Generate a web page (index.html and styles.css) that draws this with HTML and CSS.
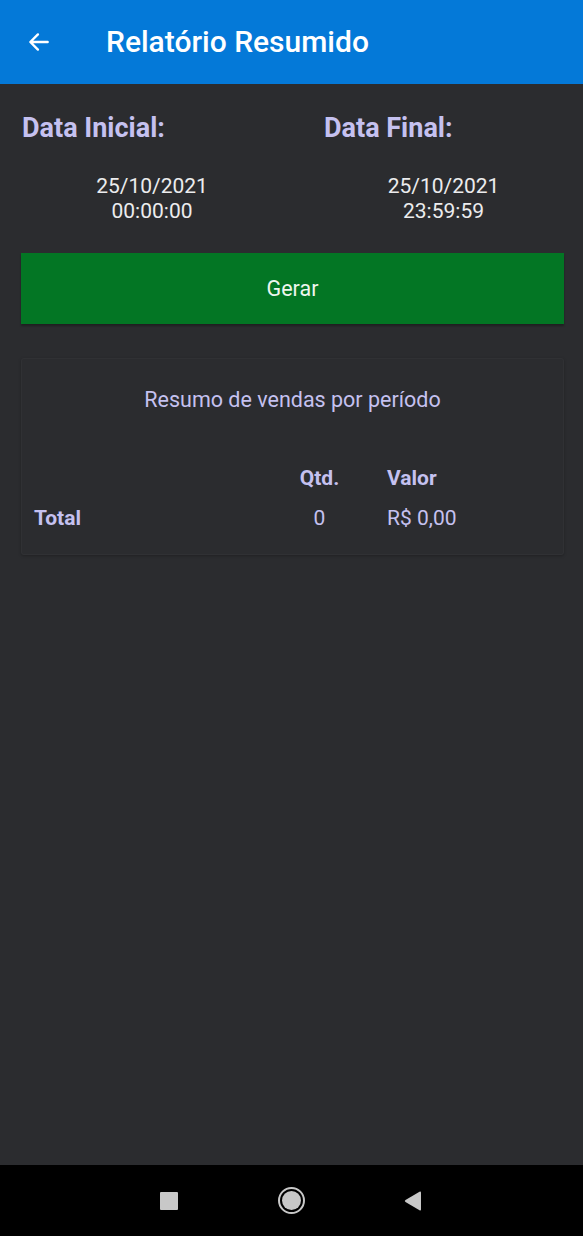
FILE: index.html
```html
<!doctype html>
<html lang="pt-BR">
<head>
    <meta charset="UTF-8">
    <title>Relatório Resumido</title>
    <link rel="stylesheet" href="styles.css">
</head>
<body>
    <div class="screen">
        <header class="appBar">
            <span class="backBtn">
                <svg width="26" height="26" viewBox="0 0 24 24"><path d="M20 12H4.5M11 5l-7 7 7 7" fill="none" stroke="#fff" stroke-width="2.2" stroke-linecap="round" stroke-linejoin="round"/></svg>
            </span>
            <h1 class="title">Relatório Resumido</h1>
        </header>

        <main class="content">
            <div class="dates">
                <div class="dateCol">
                    <h2 class="dateLabel">Data Inicial:</h2>
                    <div class="dateValue">25/10/2021<br>00:00:00</div>
                </div>
                <div class="dateCol">
                    <h2 class="dateLabel">Data Final:</h2>
                    <div class="dateValue">25/10/2021<br>23:59:59</div>
                </div>
            </div>

            <button class="btnGerar">Gerar</button>

            <section class="card">
                <p class="cardTitle">Resumo de vendas por período</p>
                <div class="row head">
                    <span class="cName"></span>
                    <span class="cQtd">Qtd.</span>
                    <span class="cVal">Valor</span>
                </div>
                <div class="row">
                    <span class="cName bold">Total</span>
                    <span class="cQtd">0</span>
                    <span class="cVal">R$ 0,00</span>
                </div>
            </section>
        </main>

        <nav class="navBar">
            <span class="navSquare"></span>
            <span class="navCircle"><i></i></span>
            <svg class="navBack" width="20" height="22" viewBox="0 0 20 22"><path d="M18 2.5v17a1 1 0 0 1-1.5.8L2.5 12a1.2 1.2 0 0 1 0-2L16.5 1.7A1 1 0 0 1 18 2.5z" fill="#c8c8c8"/></svg>
        </nav>
    </div>
</body>
</html>
```

FILE: styles.css
```css
*{
    margin: 0;
    padding: 0;
    box-sizing: border-box;
}
html,body{
    height: 100%;
}
body{
    background: #2b2c2f;
    font-family: Roboto, "Noto Sans", Arial, sans-serif;
}
.screen{
    height: 1236px;
    display: flex;
    flex-direction: column;
}
.appBar{
    height: 84px;
    background: #0479d8;
    display: flex;align-items: center;
    padding-left: 26px;
}
.backBtn{
    display: flex;width: 26px;height: 26px;
}
.title{
    margin-left: 54px;
    color: #fff;font-size: 30px;font-weight: 500;
    line-height: 34px;
}
.content{
    flex: 1;
    padding: 0 19px 0 21px;
}
.dates{
    display: grid;
    grid-template-columns: 262px 1fr;
    gap: 40px;
    padding-top: 29px;
}
.dateLabel{
    color: #c5c1f0;font-size: 27px;font-weight: 700;
    line-height: 30px;padding-left: 1px;
}
.dateValue{
    margin-top: 31px;
    text-align: center;
    color: #ececee;font-size: 21px;line-height: 25px;
}
.btnGerar{
    display: block;width: 100%;height: 71px;
    margin-top: 29px;
    background: #037624;border: none;
    color: #eef6ee;font-family: inherit;font-size: 21.5px;
    box-shadow: 0 2px 2px rgba(0,0,0,0.3);
}
.card{
    margin-top: 34px;
    height: 197px;
    border: 1px solid #303134;
    border-radius: 3px;
    padding: 0 12px;
    box-shadow: 0 1px 3px rgba(0,0,0,0.25);
}
.cardTitle{
    text-align: center;
    margin-top: 28px;
    color: #c5c1f0;font-size: 21.5px;line-height: 26px;
}
.row{
    display: flex;
    color: #c5c1f0;font-size: 21px;line-height: 26px;
}
.row.head{
    margin-top: 52px;
    font-weight: 700;
}
.row + .row{
    margin-top: 14px;
}
.cName{
    width: 247px;
}
.bold{
    font-weight: 700;
}
.cQtd{
    width: 77px;text-align: center;
}
.cVal{
    margin-left: 29px;
}
.navBar{
    height: 71px;
    background: #000;
    display: flex;align-items: center;justify-content: center;
}
.navSquare{
    width: 18px;height: 18px;background: #c8c8c8;border-radius: 1px;
    margin-right: 100px;
}
.navCircle{
    width: 27px;height: 27px;border-radius: 50%;
    border: 2px solid #c8c8c8;
    display: flex;align-items: center;justify-content: center;
}
.navCircle i{
    display: block;width: 19px;height: 19px;border-radius: 50%;background: #c8c8c8;
}
.navBack{
    margin-left: 98px;
}
```
